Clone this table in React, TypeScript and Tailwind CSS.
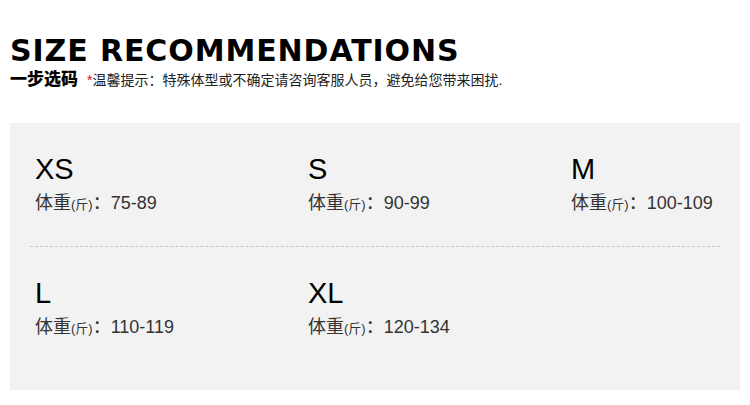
// Size recommendation block: title, tip line, and a grey panel of sizes.

const ROWS = [
  [
    { size: "XS", range: "75-89" },
    { size: "S", range: "90-99" },
    { size: "M", range: "100-109" },
  ],
  [
    { size: "L", range: "110-119" },
    { size: "XL", range: "120-134" },
  ],
];

const CJK = "font-['Liberation_Sans','Noto_Sans_CJK_SC',sans-serif]";

export default function App() {
  return (
    <div className={`h-[405px] w-[750px] overflow-hidden bg-white ${CJK}`}>
      <div className="px-[10px] pt-[33px]">
        <h1 className="font-['DejaVu_Sans',sans-serif] text-[30px] font-bold leading-[36px] tracking-[0.9px] text-black">
          SIZE RECOMMENDATIONS
        </h1>
        <p className="mt-[1px] flex items-baseline leading-[20px]">
          <span className="text-[17px] font-black text-black">一步选码</span>
          <span className="ml-[9px] text-[14px] text-[#222]">
            <span className="text-[#e00]">*</span>温馨提示：特殊体型或不确定请咨询客服人员，避免给您带来困扰.
          </span>
        </p>
      </div>

      <div className="mx-[10px] mt-[33px] h-[267px] bg-[#f2f2f2] pl-[25px] pr-[20px]">
        <Row items={ROWS[0]} className="pt-[30px]" />
        <div className="ml-[-5px] mt-[29px] border-t border-dashed border-[#c8c8c8]" />
        <Row items={ROWS[1]} className="pt-[30px]" />
      </div>
    </div>
  );
}

function Row({ items, className }: { items: { size: string; range: string }[]; className?: string }) {
  return (
    <div className={`grid grid-cols-[273px_263px_1fr] ${className ?? ""}`}>
      {items.map((it) => (
        <div key={it.size}>
          <div className="text-[29px] leading-[32px] text-black">{it.size}</div>
          <div className="mt-[6px] text-[18px] leading-[25px] text-[#333]">
            体重<span className="text-[13px]">(斤)</span>：{it.range}
          </div>
        </div>
      ))}
    </div>
  );
}
